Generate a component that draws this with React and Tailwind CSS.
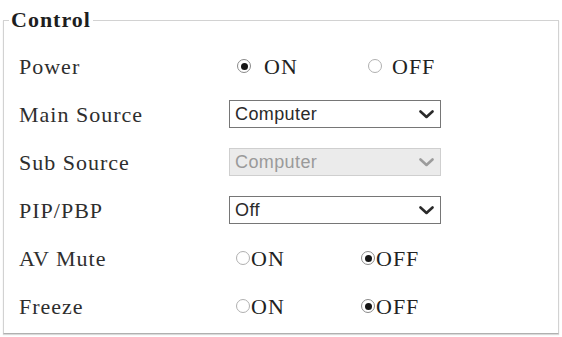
const serifText = "font-['Liberation_Serif','Times_New_Roman',serif] text-[22px] tracking-[1px]";

const Radio = ({ checked }) =>
  checked ? (
    <span className="flex h-[14px] w-[14px] shrink-0 items-center justify-center rounded-full border border-[#8a8a8a] bg-white">
      <span className="h-[7px] w-[7px] rounded-full bg-[#151515]" />
    </span>
  ) : (
    <span className="block h-[14px] w-[14px] shrink-0 rounded-full border border-[#b0b0b0] bg-white" />
  );

const Chevron = ({ color }) => (
  <svg width="15" height="9" viewBox="0 0 15 9" fill="none">
    <path d="M1.5 1.5 L7.5 7 L13.5 1.5" stroke={color} strokeWidth="2.6" strokeLinecap="round" strokeLinejoin="round" />
  </svg>
);

const Select = ({ value, disabled }) => (
  <div
    className={`flex h-[28px] w-[212px] items-center justify-between border pl-[5px] pr-[6px] font-['Liberation_Sans',Arial,sans-serif] text-[18px] tracking-[0.4px] ${
      disabled ? "border-[#cfcfcf] bg-[#ebebeb] text-[#9a9a9a]" : "border-[#767676] bg-white text-[#2a2a2a]"
    }`}
  >
    <span>{value}</span>
    <Chevron color={disabled ? "#9c9c9c" : "#2a2a2a"} />
  </div>
);

const Row = ({ label, children }) => (
  <div className="flex h-[48px] items-center">
    <div className={`w-[210px] text-[#2e2e2e] ${serifText}`}>{label}</div>
    {children}
  </div>
);

const Choice = ({ checked, label, className }) => (
  <div className={`flex items-center ${className}`}>
    <Radio checked={checked} />
    <span className={`text-[#222] ${serifText}`}>{label}</span>
  </div>
);

export default function App() {
  return (
    <div className="h-[337px] w-[562px] bg-white pl-[3px] pt-[8px]">
      <fieldset className="w-[556px] border border-[#d2d2d2] border-b-[#b0b0b0] pb-[3px] pl-[15px] shadow-[0_1px_1px_rgba(0,0,0,0.15)]">
        <legend className={`-ml-[10px] px-[2px] font-bold leading-[24px] text-[#1e1e1e] ${serifText}`}>
          Control
        </legend>
        <div className="pt-[10px]">
          <Row label="Power">
            <Choice checked label="ON" className="ml-[8px] w-[131px] gap-[13px]" />
            <Choice label="OFF" className="gap-[10px]" />
          </Row>
          <Row label="Main Source">
            <Select value="Computer" />
          </Row>
          <Row label="Sub Source">
            <Select value="Computer" disabled />
          </Row>
          <Row label="PIP/PBP">
            <Select value="Off" />
          </Row>
          <Row label="AV Mute">
            <Choice label="ON" className="ml-[7px] w-[125px] gap-[1px]" />
            <Choice checked label="OFF" className="gap-[1px]" />
          </Row>
          <Row label="Freeze">
            <Choice label="ON" className="ml-[7px] w-[125px] gap-[1px]" />
            <Choice checked label="OFF" className="gap-[1px]" />
          </Row>
        </div>
      </fieldset>
    </div>
  );
}
